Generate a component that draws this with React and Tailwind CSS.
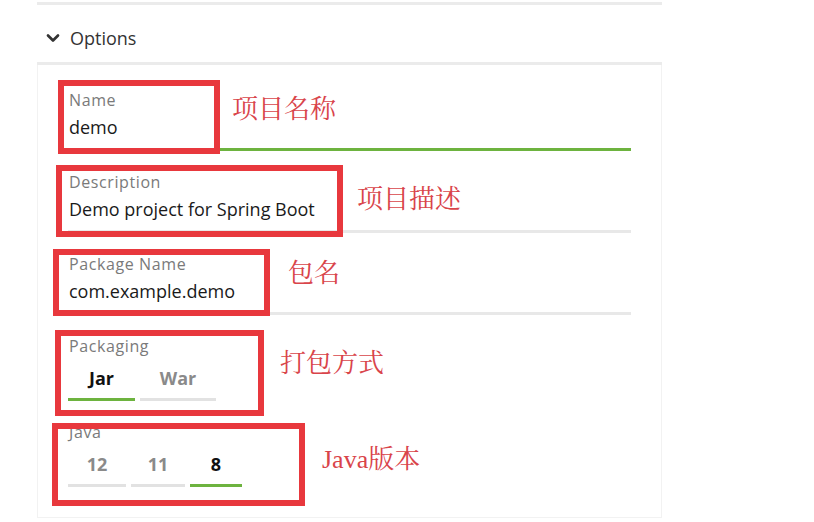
import { ChevronDown } from "lucide-react"

const ui = { fontFamily: '"Open Sans", "Liberation Sans", sans-serif' }
const note = { fontFamily: '"Liberation Serif", "Noto Serif CJK SC", "Noto Sans CJK SC", serif' }

function TextField({ label, value, active }) {
    return (
        <div className="flex flex-col">
            <div className="text-[16px] leading-[18px] tracking-[0.6px] text-[#7a7a7a] pl-px">{label}</div>
            <div className="mt-[6px] text-[18px] leading-[24px] text-[#1a1a1a] pl-px">{value}</div>
            <div className={`mt-[9px] h-[3px] ${active ? "bg-[#6db33f]" : "bg-[#e8e8e8]"}`}></div>
        </div>
    )
}

function RadioField({ label, options, selected }) {
    return (
        <div className="flex flex-col">
            <div className="text-[16px] leading-[18px] tracking-[0.6px] text-[#7a7a7a] pl-px">{label}</div>
            <div className="mt-[11px] flex gap-[5px]">
                {options.map(o => (
                    <div key={o.name} className="flex flex-col" style={{ width: o.w }}>
                        <div className={`text-center text-[18px] leading-[24px] font-bold ${o.name === selected ? "text-[#111]" : "text-[#8a8a8a]"}`}>
                            {o.name}
                        </div>
                        <div className={`mt-[8px] h-[3px] ${o.name === selected ? "bg-[#6db33f]" : "bg-[#e2e2e2]"}`}></div>
                    </div>
                ))}
            </div>
        </div>
    )
}

export default function App() {
    const boxes = [
        { l: 58, t: 80, w: 162, h: 74 },
        { l: 56, t: 165, w: 287, h: 72 },
        { l: 53, t: 249, w: 217, h: 67 },
        { l: 55, t: 330, w: 209, h: 86 },
        { l: 52, t: 423, w: 253, h: 83 },
    ]
    const notes = [
        { l: 232, t: 94, text: "项目名称" },
        { l: 357, t: 184, text: "项目描述" },
        { l: 288, t: 258, text: "包名" },
        { l: 280, t: 348, text: "打包方式" },
        { l: 322, t: 444, text: "Java版本" },
    ]

    return (
        <div className="relative w-[814px] h-[522px] bg-white overflow-hidden" style={ui}>
            <div className="ml-[37px] w-[625px] pt-[2px]">
                <div className="h-[3px] bg-[#ebebeb]"></div>
                <div className="h-[57px] flex items-center pt-[8px] pl-[6px] gap-[7px] text-[#333]">
                    <ChevronDown size={20} strokeWidth={3.2} />
                    <span className="text-[18px] leading-none">Options</span>
                </div>
                <div className="h-[3px] bg-[#ebebeb]"></div>
                <div className="h-[453px] border-x border-b border-[#f2f2f2] pl-[30px] pr-[30px] pt-[26px] flex flex-col gap-[22px]">
                    <TextField label="Name" value="demo" active />
                    <TextField label="Description" value="Demo project for Spring Boot" />
                    <TextField label="Package Name" value="com.example.demo" />
                    <RadioField
                        label="Packaging"
                        options={[{ name: "Jar", w: 67 }, { name: "War", w: 76 }]}
                        selected="Jar"
                    />
                    <RadioField
                        label="Java"
                        options={[{ name: "12", w: 58 }, { name: "11", w: 54 }, { name: "8", w: 52 }]}
                        selected="8"
                    />
                </div>
            </div>

            {boxes.map((b, i) => (
                <div
                    key={i}
                    className="absolute border-[6px] border-[#e8383d]"
                    style={{ left: b.l, top: b.t, width: b.w, height: b.h }}
                ></div>
            ))}
            {notes.map((n, i) => (
                <div
                    key={i}
                    className="absolute text-[26px] leading-[32px] text-[#d9444a] whitespace-nowrap"
                    style={{ ...note, left: n.l, top: n.t }}
                >
                    {n.text}
                </div>
            ))}
        </div>
    )
}
